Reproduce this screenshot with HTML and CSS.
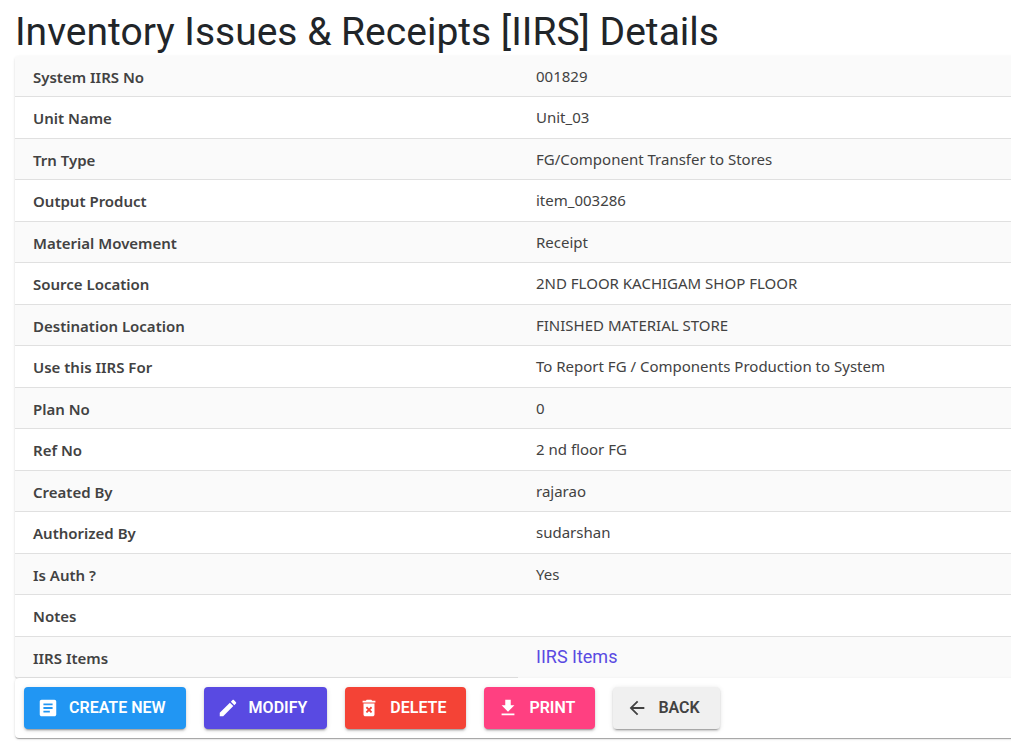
FILE: index.html
```html
<!DOCTYPE html>
<html lang="en">
<head>
  <meta charset="UTF-8">
  <meta name="viewport" content="width=device-width, initial-scale=1.0">
  <title>Inventory Issues &amp; Receipts [IIRS] Details</title>
  <link rel="stylesheet" href="styles.css">
</head>
<body>

  <h1>Inventory Issues &amp; Receipts [IIRS] Details</h1>

  <div class="card">
    <table class="details">
      <tbody>
        <tr><th scope="row">System IIRS No</th><td>001829</td></tr>
        <tr><th scope="row">Unit Name</th><td>Unit_03</td></tr>
        <tr><th scope="row">Trn Type</th><td>FG/Component Transfer to Stores</td></tr>
        <tr><th scope="row">Output Product</th><td>item_003286</td></tr>
        <tr><th scope="row">Material Movement</th><td>Receipt</td></tr>
        <tr><th scope="row">Source Location</th><td>2ND FLOOR KACHIGAM SHOP FLOOR</td></tr>
        <tr><th scope="row">Destination Location</th><td>FINISHED MATERIAL STORE</td></tr>
        <tr><th scope="row">Use this IIRS For</th><td>To Report FG / Components Production to System</td></tr>
        <tr><th scope="row">Plan No</th><td>0</td></tr>
        <tr><th scope="row">Ref No</th><td>2 nd floor FG</td></tr>
        <tr><th scope="row">Created By</th><td>rajarao</td></tr>
        <tr><th scope="row">Authorized By</th><td>sudarshan</td></tr>
        <tr><th scope="row">Is Auth ?</th><td>Yes</td></tr>
        <tr><th scope="row">Notes</th><td></td></tr>
        <tr><th scope="row">IIRS Items</th><td><a class="items-link" href="#">IIRS Items</a></td></tr>
      </tbody>
    </table>
  </div>

  <div class="card actions">
    <button type="button" class="btn btn-create">
      <svg viewBox="0 0 24 24"><path d="M19 3H5c-1.100 0-2 .9-2 2v14c0 1.100.9 2 2 2h14c1.100 0 2-.9 2-2V5c0-1.100-.9-2-2-2zm-5 14H7v-2h7v2zm3-4H7v-2h10v2zm0-4H7V7h10v2z"/></svg>
      CREATE NEW
    </button>
    <button type="button" class="btn btn-modify">
      <svg viewBox="0 0 24 24"><path d="M3 17.250V21h3.750L17.810 9.940l-3.750-3.750L3 17.250zM20.710 7.040c.39-.39.39-1.020 0-1.410l-2.340-2.340c-.39-.39-1.020-.39-1.410 0l-1.830 1.830 3.750 3.750 1.830-1.830z"/></svg>
      MODIFY
    </button>
    <button type="button" class="btn btn-delete">
      <svg viewBox="0 0 24 24"><path fill-rule="evenodd" d="M6 19c0 1.100.9 2 2 2h8c1.100 0 2-.9 2-2V7H6v12zm2.460-7.120l1.410-1.410L12 12.590l2.120-2.120 1.410 1.410L13.410 14l2.120 2.120-1.410 1.410L12 15.410l-2.120 2.120-1.410-1.410L10.590 14l-2.130-2.120z"/><path d="M15.500 4l-1-1h-5l-1 1H5v2h14V4z"/></svg>
      DELETE
    </button>
    <button type="button" class="btn btn-print">
      <svg viewBox="0 0 24 24"><path d="M19 9h-4V3H9v6H5l7 7 7-7zM5 18v2h14v-2H5z"/></svg>
      PRINT
    </button>
    <button type="button" class="btn btn-back">
      <svg viewBox="0 0 24 24"><path d="M20 11H7.830l5.590-5.590L12 4l-8 8 8 8 1.410-1.410L7.830 13H20v-2z"/></svg>
      BACK
    </button>
  </div>

</body>
</html>
```
FILE: styles.css
```css
body {
  margin: 0;
  padding: 8px 0 8px 15px;
  font-family: Roboto, sans-serif;
  background-color: #fff;
  color: #212529;
  overflow-x: hidden;
}
h1 {
  margin: 0;
  font-size: 39px;
  font-weight: 400;
  line-height: 48px;
}
/* cards run past the right edge of the page */
.card {
  margin-right: -10px;
  border-radius: 4px;
  background-color: #fff;
  box-shadow: 0 2px 1px -1px rgba(0, 0, 0, 0.2), 0 1px 1px 0 rgba(0, 0, 0, 0.14), 0 1px 3px 0 rgba(0, 0, 0, 0.12);
  overflow: hidden;
}
.details {
  width: 100%;
  table-layout: fixed;
  border-collapse: separate;
  border-spacing: 0;
  font-family: "Noto Sans", sans-serif;
  font-size: 15px;
  line-height: 20px;
  color: #424242;
}
.details th,
.details td {
  height: 20px;
  padding: 10px 18px;
  border-bottom: 1px solid #e0e0e0;
  text-align: left;
  font-weight: 400;
  vertical-align: top;
}
.details th {
  padding: 11px 18px 9px;
  font-weight: 600;
}
.details tr:nth-child(odd) {
  background-color: #fafafa;
}
.details tr:nth-child(even) td {
  padding-bottom: 11px;
}
.details tr:last-child td {
  border-bottom-color: transparent;
}
.items-link {
  font-family: Roboto, sans-serif;
  font-size: 18px;
  color: #594ae2;
  text-decoration: none;
}
.actions {
  display: flex;
  gap: 18px;
  padding: 9px;
}
.btn {
  display: flex;
  align-items: center;
  gap: 10px;
  height: 42px;
  padding: 0 20px 2px 13px;
  border: none;
  border-radius: 4px;
  font-family: Roboto, sans-serif;
  font-size: 16px;
  font-weight: 600;
  color: #fff;
  white-space: nowrap;
  cursor: pointer;
  box-shadow: 0 3px 1px -2px rgba(0, 0, 0, 0.2), 0 2px 2px 0 rgba(0, 0, 0, 0.14), 0 1px 5px 0 rgba(0, 0, 0, 0.12);
}
.btn svg {
  width: 22px;
  height: 22px;
  margin-top: 2px;
  fill: currentColor;
}
.btn-create {
  background-color: #2196f3;
}
.btn-modify {
  background-color: #594ae2;
}
.btn-delete {
  background-color: #f44336;
}
.btn-print {
  background-color: #ff4081;
}
.btn-back {
  background-color: #f0f0f0;
  color: #424242;
}
```
